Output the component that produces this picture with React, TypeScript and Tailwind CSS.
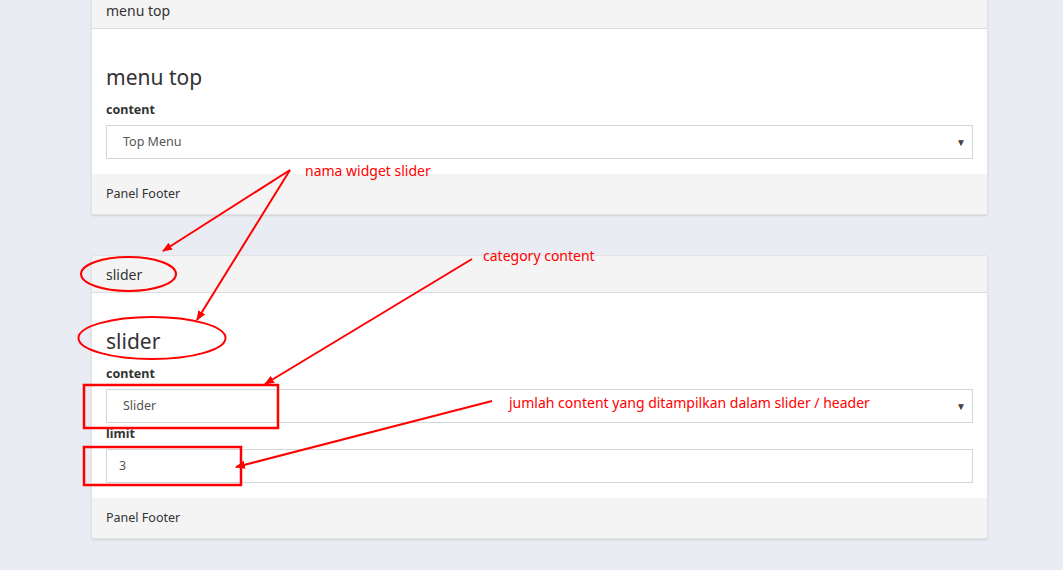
const font = { fontFamily: '"Noto Sans", "Open Sans", sans-serif' };

const SelectBox = ({ value }: { value: string }) => (
  <div className="flex h-[34px] items-center justify-between border border-[#d2d6de] bg-white pl-[16px] pr-[6px] text-[12.5px] text-[#555]">
    <span>{value}</span>
    <span className="text-[10px] text-[#444]">▼</span>
  </div>
);

const InputBox = ({ value }: { value: string }) => (
  <div className="flex h-[34px] items-center border border-[#d2d6de] bg-white pl-[12px] text-[12.5px] text-[#555]">
    {value}
  </div>
);

const Field = ({ label, children }: { label: string; children: React.ReactNode }) => (
  <div className="mt-[1px]">
    <div className="mb-[4px] flex h-[21px] items-center text-[12.5px] font-bold text-[#333]">{label}</div>
    {children}
  </div>
);

const Panel = ({ title, children }: { title: string; children: React.ReactNode }) => (
  <div className="overflow-hidden rounded-[3px] border border-[#e3e3e3] bg-white shadow-[0_1px_2px_rgba(0,0,0,0.12)]">
    <div className="flex h-[37px] items-center border-b border-[#dcdcdc] bg-[#f4f4f4] px-[14px] text-[14px] text-[#333]">
      {title}
    </div>
    <div className="px-[14px] pb-[15px] pt-[37px]">
      <h3 className="mb-[10px] flex h-[24px] items-center text-[21px] text-[#333]">{title}</h3>
      {children}
    </div>
    <div className="flex h-[40px] items-center bg-[#f4f4f4] px-[14px] text-[12.5px] text-[#333]">Panel Footer</div>
  </div>
);

const Annotations = () => (
  <>
    <svg className="pointer-events-none absolute left-0 top-0" width="1063" height="570">
      <defs>
        <marker id="arr" markerWidth="10" markerHeight="8" refX="9" refY="4" orient="auto" markerUnits="userSpaceOnUse">
          <path d="M0,0 L10,4 L0,8 z" fill="#ff0000" />
        </marker>
      </defs>
      <g stroke="#ff0000" strokeWidth="2" fill="none">
        <line x1="290" y1="170" x2="163" y2="251" markerEnd="url(#arr)" />
        <line x1="290" y1="170" x2="197" y2="320" markerEnd="url(#arr)" />
        <line x1="472" y1="259" x2="265" y2="384" markerEnd="url(#arr)" />
        <line x1="492" y1="401" x2="236" y2="467" markerEnd="url(#arr)" />
        <ellipse cx="128.5" cy="274" rx="47.5" ry="17" />
        <ellipse cx="152" cy="338" rx="73.5" ry="21" />
        <rect x="84" y="385" width="194" height="43" strokeWidth="2.5" />
        <rect x="84" y="447" width="157" height="38" strokeWidth="2.5" />
      </g>
    </svg>
    <div className="absolute left-[305px] top-[160px] text-[14px] text-[#ff0000]">nama widget slider</div>
    <div className="absolute left-[483px] top-[245px] text-[14px] text-[#ff0000]">category content</div>
    <div className="absolute left-[509px] top-[392px] text-[14px] text-[#ff0000]">
      jumlah content yang ditampilkan dalam slider / header
    </div>
  </>
);

export default function App() {
  return (
    <div className="relative h-[570px] w-[1063px] overflow-hidden bg-[#e9ecf3]" style={font}>
      <div className="-mt-[9px] ml-[91px] flex w-[897px] flex-col gap-[40px]">
        <Panel title="menu top">
          <Field label="content">
            <SelectBox value="Top Menu" />
          </Field>
        </Panel>
        <Panel title="slider">
          <Field label="content">
            <SelectBox value="Slider" />
          </Field>
          <Field label="limit">
            <InputBox value="3" />
          </Field>
        </Panel>
      </div>
      <Annotations />
    </div>
  );
}
